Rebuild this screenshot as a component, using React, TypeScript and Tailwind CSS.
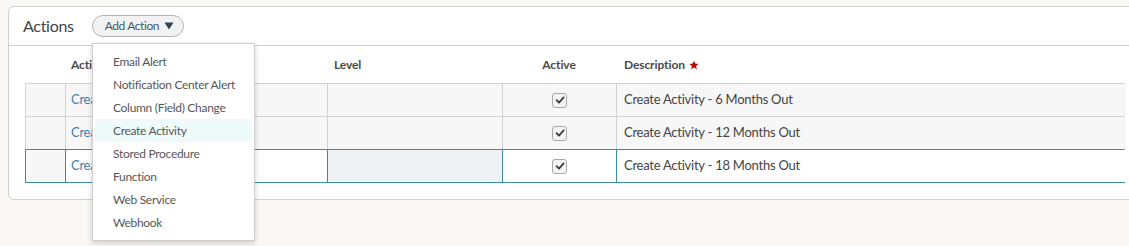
import React from "react";

const font = { fontFamily: "Lato, 'Liberation Sans', sans-serif" };

function Check() {
  return (
    <span className="flex h-[15px] w-[15px] items-center justify-center rounded-[3px] border border-[#a9a9a9] bg-[#f4f4f4]">
      <svg width="10" height="10" viewBox="0 0 10 10">
        <path d="M1.6 5.2 L4 7.6 L8.6 2.4" fill="none" stroke="#3c3c3c" strokeWidth="1.8" strokeLinecap="round" strokeLinejoin="round" />
      </svg>
    </span>
  );
}

const rows = [
  { d: "Create Activity - 6 Months Out", sel: false },
  { d: "Create Activity - 12 Months Out", sel: false },
  { d: "Create Activity - 18 Months Out", sel: true },
];

const menu = [
  "Email Alert",
  "Notification Center Alert",
  "Column (Field) Change",
  "Create Activity",
  "Stored Procedure",
  "Function",
  "Web Service",
  "Webhook",
];

export default function App() {
  return (
    <div className="relative h-[246px] w-[1129px] overflow-hidden bg-[#f9f8f4] pl-[8px] pt-[6px] text-[#444]" style={font}>
      <div className="w-[1134px] rounded-[6px] border border-[#cfcfcf] bg-white pb-[16px]">
        <div className="flex h-[39px] items-center border-b border-[#cfcfcf] pl-[14px]">
          <span className="text-[16px] tracking-[-0.3px] text-[#444]">Actions</span>
          <button className="ml-[18px] flex h-[22px] items-center gap-[5px] rounded-full border border-[#b4b4b4] bg-[#f2f2f2] pl-[12px] pr-[9px] text-[12px] tracking-[-0.4px] text-[#3e5a69]">
            <span>Add Action</span>
            <svg width="10" height="8" viewBox="0 0 10 8">
              <path d="M0.5 0.5 H9.5 L5 7.5 Z" fill="#2f4553" />
            </svg>
          </button>
        </div>
        <div className="mx-[16px]">
          <div className="grid h-[38px] grid-cols-[40px_262px_175px_114px_509px] items-center border-b border-[#d2d2d2] text-[12px] font-bold tracking-[-0.1px] text-[#4a4a4a]">
            <div />
            <div className="pl-[6px]">Action</div>
            <div className="pl-[7px]">Level</div>
            <div className="text-center">Active</div>
            <div className="flex items-center gap-[4px] pl-[8px]">
              Description
              <svg width="10" height="10" viewBox="0 0 24 24">
                <path d="M12 1.5l3.1 7.1 7.7.7-5.8 5.1 1.7 7.6L12 18l-6.7 4 1.7-7.6L1.2 9.3l7.7-.7z" fill="#c40000" />
              </svg>
            </div>
          </div>
          {rows.map((r, i) => {
            const b = r.sel ? "border-[#3a8aa5]" : "border-[#d2d2d2]";
            const rowB = r.sel || i === 1 ? "border-[#3a8aa5]" : "border-[#d2d2d2]";
            return (
              <div
                key={i}
                className={`grid h-[33px] grid-cols-[40px_262px_175px_114px_509px] border-b border-x text-[13px] tracking-[-0.25px] ${rowB}`}
                style={i === 1 ? { borderLeftColor: "#d2d2d2", borderRightColor: "#d2d2d2" } : undefined}
              >
                <div className={`border-r bg-[#f7f7f7] ${b}`} />
                <div className={`flex items-center border-r pl-[5px] text-[#3d80ad] ${b} ${r.sel ? "bg-white" : "bg-[#f7f7f7]"}`}>Create Activity</div>
                <div className={`border-r ${b} ${r.sel ? "bg-[#eff2f5]" : "bg-[#f7f7f7]"}`} />
                <div className={`flex items-center justify-center border-r ${b} ${r.sel ? "bg-white" : "bg-[#f7f7f7]"}`}>
                  <Check />
                </div>
                <div className={`flex items-center pl-[7px] text-[#444] ${r.sel ? "bg-white" : "bg-[#f7f7f7]"}`}>{r.d}</div>
              </div>
            );
          })}
        </div>
      </div>

      <div className="absolute left-[92px] top-[43px] w-[163px] border border-[#cfcfcf] bg-white py-[6px] shadow-[0_2px_6px_rgba(0,0,0,0.18)]">
        {menu.map((m) => (
          <div
            key={m}
            className={`mx-[2px] flex h-[23px] items-center pl-[18px] text-[12px] tracking-[-0.3px] text-[#575757] ${m === "Create Activity" ? "bg-[#effbfb]" : ""}`}
          >
            {m}
          </div>
        ))}
      </div>
    </div>
  );
}
